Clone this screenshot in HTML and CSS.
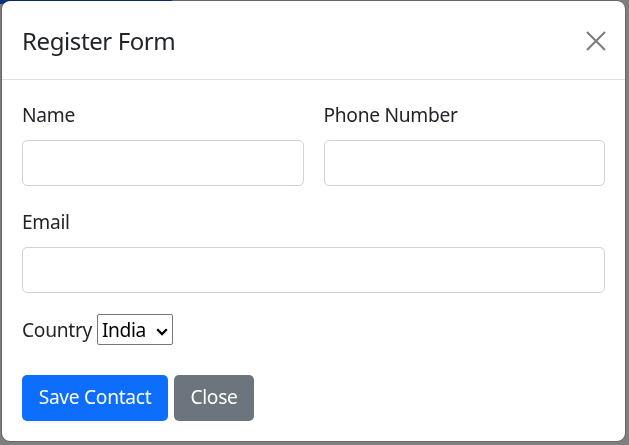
FILE: index.html
```html
<!DOCTYPE html>
<html lang="en">
<head>
<meta charset="utf-8">
<title>Register Form</title>
<link rel="stylesheet" href="styles.css">
</head>
<body>
<div class="page">
  <div class="launch-btn"></div>
</div>
<div class="backdrop"></div>
<div class="modal">
  <div class="modal-header">
    <h5 class="modal-title">Register Form</h5>
    <button class="btn-close" type="button" aria-label="Close">
      <svg width="20" height="20" viewBox="0 0 20 20"><path d="M1 1L19 19M19 1L1 19" stroke="#000" stroke-width="2.2" fill="none"/></svg>
    </button>
  </div>
  <div class="modal-body">
    <div class="row">
      <div class="field">
        <label class="form-label">Name</label>
        <input class="form-control" type="text">
      </div>
      <div class="field">
        <label class="form-label">Phone Number</label>
        <input class="form-control" type="text">
      </div>
    </div>
    <div class="field email">
      <label class="form-label">Email</label>
      <input class="form-control" type="email">
    </div>
    <div class="country">
      <label class="country-label">Country</label>
      <span class="select-wrap">
        <select class="country-select"><option>India</option></select>
        <svg class="chevron" width="12" height="8" viewBox="0 0 12 8"><path d="M1.2 1.3L6 6.1L10.8 1.3" stroke="#000" stroke-width="2.2" fill="none"/></svg>
      </span>
    </div>
    <div class="actions">
      <button class="btn btn-primary" type="button">Save Contact</button>
      <button class="btn btn-secondary" type="button">Close</button>
    </div>
  </div>
</div>
</body>
</html>
```
FILE: styles.css
```css
html, body {
  margin: 0;
  padding: 0;
  background: #fff;
  font-family: "Noto Sans", "Open Sans", sans-serif;
  color: #212529;
}
.page {
  height: 445px;
}
.launch-btn {
  width: 172px;
  height: 4px;
  background: #0d6efd;
}
.backdrop {
  position: fixed;
  inset: 0;
  background: rgba(0, 0, 0, 0.5);
}
.modal {
  position: fixed;
  left: 1px;
  top: 0;
  width: 623px;
  height: 440px;
  background: #fff;
  border: 1px solid rgba(0, 0, 0, 0.2);
  border-radius: 9px;
  background-clip: padding-box;
  display: flex;
  flex-direction: column;
}
.modal-header {
  height: 78px;
  border-bottom: 1px solid #dee2e6;
  display: flex;
  align-items: center;
  justify-content: space-between;
  padding: 0 19px 0 20px;
}
.modal-title {
  margin: 0;
  font-size: 24px;
  font-weight: 400;
  letter-spacing: -0.4px;
  line-height: 1.5;
  margin-top: 2px;
}
.btn-close {
  border: 0;
  background: none;
  padding: 0;
  width: 20px;
  height: 20px;
  opacity: 0.5;
  margin-top: 2px;
  display: flex;
}
.modal-body {
  padding: 21px 20px 19px 20px;
  display: flex;
  flex-direction: column;
}
.row {
  display: grid;
  grid-template-columns: minmax(0, 1fr) minmax(0, 1fr);
  column-gap: 20px;
}
.field {
  display: flex;
  flex-direction: column;
  min-width: 0;
}
.email {
  margin-top: 22px;
}
.form-label {
  font-size: 19.2px;
  letter-spacing: -0.3px;
  line-height: 28.8px;
  margin-bottom: 10px;
}
.form-control {
  box-sizing: border-box;
  width: 100%;
  min-width: 0;
  height: 46px;
  border: 1px solid #ced4da;
  border-radius: 5px;
  font: inherit;
  font-size: 19.2px;
  padding: 4px 12px;
  margin: 0;
  background: #fff;
}
.country {
  margin-top: 21px;
  display: flex;
  align-items: baseline;
  gap: 5px;
}
.country-label {
  font-size: 19.2px;
  letter-spacing: -0.3px;
  line-height: 28.8px;
}
.select-wrap {
  position: relative;
  display: inline-flex;
}
.country-select {
  box-sizing: border-box;
  width: 76px;
  height: 31px;
  font-family: inherit;
  font-size: 19.2px;
  letter-spacing: -0.4px;
  color: #000;
  border: 1px solid #767676;
  border-radius: 2px;
  background: #fff;
  padding: 0 0 0 4px;
  -webkit-appearance: none;
  appearance: none;
}
.chevron {
  position: absolute;
  left: 59px;
  top: 14px;
  pointer-events: none;
}
.actions {
  margin-top: 30px;
  display: flex;
  gap: 6px;
}
.btn {
  height: 46px;
  border: 1px solid transparent;
  border-radius: 5px;
  color: #fff;
  font-family: inherit;
  font-size: 19.2px;
  letter-spacing: -0.3px;
  line-height: 28.8px;
  padding: 0;
  white-space: nowrap;
}
.btn-primary {
  background: #0d6efd;
  width: 146px;
}
.btn-secondary {
  background: #6c757d;
  width: 80px;
}
```
